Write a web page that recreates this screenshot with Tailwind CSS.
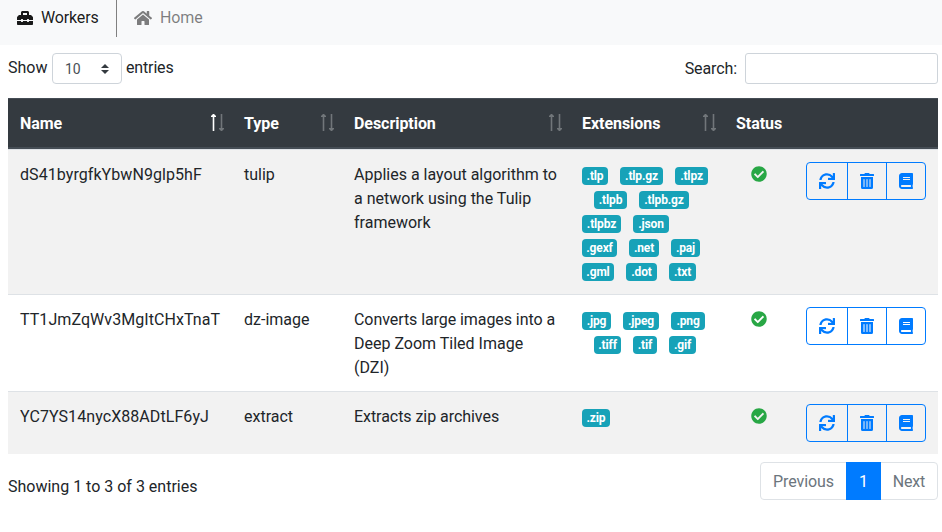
<!DOCTYPE html>
<html lang="en">
<head>
<meta charset="utf-8">
<title>Workers</title>
<script src="https://cdn.jsdelivr.net/npm/@tailwindcss/browser@4"></script>
</head>
<body class="bg-white font-[Roboto,'DejaVu_Sans',sans-serif] text-base text-[#212529]">
<svg class="hidden">
  <symbol id="toolbox" viewBox="0 0 512 512"><path d="M502.63 214.63l-45.25-45.25c-6-6-14.14-9.37-22.63-9.37H384V80c0-26.51-21.49-48-48-48H176c-26.51 0-48 21.49-48 48v80H77.25c-8.49 0-16.62 3.37-22.63 9.37L9.37 214.63c-6 6-9.37 14.14-9.37 22.63V320h128v-16c0-8.84 7.16-16 16-16h32c8.84 0 16 7.16 16 16v16h128v-16c0-8.84 7.16-16 16-16h32c8.84 0 16 7.16 16 16v16h128v-82.75c0-8.48-3.37-16.62-9.37-22.62zM320 160H192V96h128v64zm64 208c0 8.84-7.16 16-16 16h-32c-8.84 0-16-7.16-16-16v-16H192v16c0 8.84-7.16 16-16 16h-32c-8.84 0-16-7.16-16-16v-16H0v96c0 17.67 14.33 32 32 32h448c17.67 0 32-14.33 32-32v-96H384v16z"/></symbol>
  <symbol id="home" viewBox="0 0 576 512"><path d="M280.37 148.26L96 300.11V464a16 16 0 0 0 16 16l112.06-.29a16 16 0 0 0 15.92-16V368a16 16 0 0 1 16-16h64a16 16 0 0 1 16 16v95.64a16 16 0 0 0 16 16.05L464 480a16 16 0 0 0 16-16V300L295.67 148.26a12.19 12.19 0 0 0-15.3 0zM571.6 251.47L488 182.56V44.05a12 12 0 0 0-12-12h-56a12 12 0 0 0-12 12v72.61L318.47 43a48 48 0 0 0-61 0L4.34 251.47a12 12 0 0 0-1.6 16.9l25.5 31A12 12 0 0 0 45.15 301l235.22-193.74a12.19 12.19 0 0 1 15.3 0L530.9 301a12 12 0 0 0 16.9-1.6l25.5-31a12 12 0 0 0-1.7-16.93z"/></symbol>
  <symbol id="check" viewBox="0 0 512 512"><path d="M504 256c0 136.967-111.033 248-248 248S8 392.967 8 256 119.033 8 256 8s248 111.033 248 248zM227.314 387.314l184-184c6.248-6.248 6.248-16.379 0-22.627l-22.627-22.627c-6.248-6.249-16.379-6.249-22.628 0L216 308.118l-70.059-70.059c-6.248-6.248-16.379-6.248-22.628 0l-22.627 22.627c-6.248 6.248-6.248 16.379 0 22.627l104 104c6.249 6.249 16.379 6.249 22.628.001z"/></symbol>
  <symbol id="sync" viewBox="0 0 512 512"><path d="M440.65 12.57l4 82.77A247.16 247.16 0 0 0 255.83 8C134.73 8 33.91 94.92 12.29 209.82A12 12 0 0 0 24.09 224h49.05a12 12 0 0 0 11.67-9.26 175.91 175.91 0 0 1 317-56.94l-101.46-4.86a12 12 0 0 0-12.57 12v47.41a12 12 0 0 0 12 12H500a12 12 0 0 0 12-12V12a12 12 0 0 0-12-12h-47.37a12 12 0 0 0-11.98 12.57zM255.83 432a175.61 175.61 0 0 1-146-77.8l101.8 4.87a12 12 0 0 0 12.57-12v-47.4a12 12 0 0 0-12-12H12a12 12 0 0 0-12 12V500a12 12 0 0 0 12 12h47.35a12 12 0 0 0 12-12.6l-4.15-82.57A247.17 247.17 0 0 0 255.83 504c121.11 0 221.93-86.92 243.55-201.82a12 12 0 0 0-11.8-14.18h-49.05a12 12 0 0 0-11.67 9.26A175.86 175.86 0 0 1 255.83 432z"/></symbol>
  <symbol id="trash" viewBox="0 0 448 512"><path d="M32 464a48 48 0 0 0 48 48h288a48 48 0 0 0 48-48V128H32zm272-256a16 16 0 0 1 32 0v224a16 16 0 0 1-32 0zm-96 0a16 16 0 0 1 32 0v224a16 16 0 0 1-32 0zm-96 0a16 16 0 0 1 32 0v224a16 16 0 0 1-32 0zM432 32H312l-9.4-18.7A24 24 0 0 0 281.1 0H166.8a23.72 23.72 0 0 0-21.4 13.3L136 32H16A16 16 0 0 0 0 48v32a16 16 0 0 0 16 16h416a16 16 0 0 0 16-16V48a16 16 0 0 0-16-16z"/></symbol>
  <symbol id="book" viewBox="0 0 448 512"><path d="M448 360V24c0-13.3-10.7-24-24-24H96C43 0 0 43 0 96v320c0 53 43 96 96 96h328c13.3 0 24-10.7 24-24v-16c0-7.5-3.5-14.3-8.9-18.7-4.2-15.4-4.2-59.3 0-74.7 5.4-4.3 8.9-11.1 8.9-18.6zM128 134c0-3.3 2.7-6 6-6h212c3.3 0 6 2.7 6 6v20c0 3.3-2.7 6-6 6H134c-3.3 0-6-2.7-6-6v-20zm0 64c0-3.3 2.7-6 6-6h212c3.3 0 6 2.7 6 6v20c0 3.3-2.7 6-6 6H134c-3.3 0-6-2.7-6-6v-20zm253.4 250H96c-17.7 0-32-14.3-32-32 0-17.6 14.4-32 32-32h285.4c-1.9 17.1-1.9 46.9 0 64z"/></symbol>
  <symbol id="up" viewBox="0 0 5 17"><path d="M1.7 17V3H0V2L2 0h1l2 2v1H3.3v14z"/></symbol>
  <symbol id="down" viewBox="0 0 5 17"><path d="M1.7 0v14H0v1l2 2h1l2-2v-1H3.3V0z"/></symbol>
</svg>

<nav class="flex h-[45px] items-start bg-[#f8f9fa]">
  <a class="flex h-[37px] w-[117px] items-center gap-2 border-r border-[#808080] pb-[2px] pl-[17px] tracking-[-0.15px] text-black/90"><svg class="size-4 fill-current"><use href="#toolbox"/></svg>Workers</a>
  <a class="flex h-[37px] items-center gap-2 pb-[2px] pl-[17px] tracking-[-0.1px] text-black/50"><svg class="h-4 w-[18px] fill-current"><use href="#home"/></svg>Home</a>
</nav>

<main class="px-2 pr-1 pt-2">
  <div class="flex h-[45px] items-start justify-between">
    <label class="flex items-center"><span class="w-11 pb-0.5">Show</span>
      <span class="flex h-[31px] w-[70px] items-center justify-between rounded border border-[#ced4da] px-3 text-sm text-[#495057]">10<svg class="h-2.5 w-2 fill-[#343a40]" viewBox="0 0 4 5"><path d="M2 0L0 2h4zm0 5L0 3h4z"/></svg></span>
      <span class="ml-1 pb-0.5 tracking-[-0.15px]">entries</span></label>
    <label class="flex items-center gap-2 tracking-[-0.1px]">Search:<input class="h-[31px] w-[193px] rounded-[3px] border border-[#ced4da]"></label>
  </div>

  <table class="w-[930px] table-fixed border-separate border-spacing-0 text-left">
    <colgroup><col class="w-[224px]"><col class="w-[110px]"><col class="w-[228px]"><col class="w-[154px]"><col class="w-[70px]"><col class="w-[144px]"></colgroup>
    <thead class="bg-[#343a40] text-white">
      <tr id="head"></tr>
    </thead>
    <tbody id="rows"></tbody>
  </table>

  <div class="flex items-start justify-between pt-2">
    <div class="pt-[13px]">Showing 1 to 3 of 3 entries</div>
    <div class="flex h-[38px] text-center leading-5 text-[#6c757d]">
      <a class="w-[87px] rounded-l border border-[#dee2e6] pt-[9px] tracking-[-0.1px]">Previous</a>
      <a class="z-10 -ml-px w-[35px] border border-[#007bff] bg-[#007bff] pt-[9px] text-white">1</a>
      <a class="-ml-px w-[58px] rounded-r border border-[#dee2e6] pt-[9px] tracking-[-0.2px]">Next</a>
    </div>
  </div>
</main>

<script>
const columns = [['Name', 'asc'], ['Type', 'both'], ['Description', 'both'], ['Extensions', 'both'], ['Status', ''], ['', '']];
document.getElementById('head').innerHTML = columns.map(([label, sort]) => `<th class="border-t border-b-2 border-[#454d55] pt-[13px] pb-[11px] pl-3 pr-2 font-bold tracking-[-0.05px]"><div class="flex h-6 items-start justify-between">${label}${
  sort ? `<span class="-mt-0.5 flex items-center gap-[3px] pt-1"><svg class="h-[17px] w-[5px] fill-white ${sort === 'asc' ? 'opacity-100' : 'opacity-30'}"><use href="#up"/></svg><svg class="h-[17px] w-[5px] fill-white opacity-30"><use href="#down"/></svg></span>` : ''
}</div></th>`).join('');

const workers = [
  ['dS41byrgfkYbwN9glp5hF', 'tulip', 'Applies a layout algorithm to a network using the Tulip framework',
    [[['.tlp', 26], ['.tlp.gz', 43], ['.tlpz', 33]], [['', 0], ['.tlpb', 33], ['.tlpb.gz', 50]], [['.tlpbz', 39], ['.json', 36]], [['.gexf', 35], ['.net', 30], ['.paj', 29]], [['.gml', 32], ['.dot', 31], ['.txt', 27]]]],
  ['TT1JmZqWv3MgItCHxTnaT', 'dz-image', '<span class="tracking-[-0.07px]">Converts large images into a</span> Deep Zoom Tiled Image (DZI)',
    [[['.jpg', 29], ['.jpeg', 36], ['.png', 34]], [['', 0], ['.tiff', 27], ['.tif', 24], ['.gif', 27]]]],
  ['YC7YS14nycX88ADtLF6yJ', 'extract', '<span class="tracking-[-0.05px]">Extracts zip archives</span>', [[['.zip', 28]]]],
];
const badge = ([e, w]) => e ? `<span class="h-[18px] rounded bg-[#17a2b8] py-[3px] text-center text-xs leading-none font-bold tracking-[-0.15px] text-white" style="width:${w}px">${e}</span>` : '<span></span>';
const td = (c, extra) => `<td class="border-t border-[#dee2e6] px-3 align-top ${extra}">${c}</td>`;
const text = 'pt-[13px] pb-[11px]';
document.getElementById('rows').innerHTML = workers.map(([name, type, desc, ext]) => `<tr class="odd:bg-[#f2f2f2]">${
  td(name, 'pt-[13px] pb-[11px] tracking-[0.07px]') + td(type, text) + td(desc, text) +
  td(ext.map(l => `<div class="flex h-6 items-center gap-3 pt-[3px]">${l.map(badge).join('')}</div>`).join(''), 'py-3') +
  td('<svg class="mx-auto mt-1 size-4 fill-[#28a745]"><use href="#check"/></svg>', 'py-3') +
  td(`<div class="flex h-[38px] text-[#007bff]">
    <button class="rounded-l border border-[#007bff] px-3"><svg class="size-4 fill-current"><use href="#sync"/></svg></button>
    <button class="-ml-px border border-[#007bff] px-3"><svg class="h-4 w-[14px] fill-current"><use href="#trash"/></svg></button>
    <button class="-ml-px rounded-r border border-[#007bff] px-3"><svg class="h-4 w-[14px] fill-current"><use href="#book"/></svg></button>
  </div>`, 'py-3')
}</tr>`).join('');
</script>
</body>
</html>
